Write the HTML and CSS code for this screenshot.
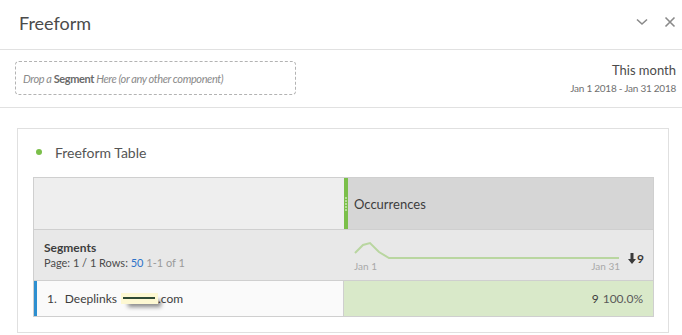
FILE: index.html
```html
<!DOCTYPE html>
<html>
<head>
<meta charset="utf-8">
<link rel="stylesheet" href="styles.css">
</head>
<body>
<div class="header">
  <div class="title">Freeform</div>
  <div class="hicons">
    <svg width="14" height="10" viewBox="0 0 14 10"><path d="M2 2.5 L7 7 L12 2.5" fill="none" stroke="#8a8a8a" stroke-width="1.6"/></svg>
    <svg width="12" height="12" viewBox="0 0 12 12"><path d="M1.5 1.5 L10.5 10.5 M10.5 1.5 L1.5 10.5" fill="none" stroke="#8a8a8a" stroke-width="1.6"/></svg>
  </div>
</div>
<div class="toolbar">
  <div class="dropzone"><span>Drop a <b>Segment</b> Here (or any other component)</span></div>
  <div class="range">
    <div class="range-name">This month</div>
    <div class="range-dates">Jan 1 2018 - Jan 31 2018</div>
  </div>
</div>
<div class="panel">
  <div class="card">
    <div class="card-title"><span class="dot"></span>Freeform Table</div>
    <div class="table">
      <div class="hcell-left"></div>
      <div class="hcell-right">
        <div class="grip"><i></i><i></i><i></i><i></i><i></i></div>
        <span>Occurrences</span>
      </div>
      <div class="seg-left">
        <div class="seg-title">Segments</div>
        <div class="seg-page">Page: 1 / 1 Rows: <span class="blue">50</span> <span class="muted">1-1 of 1</span></div>
      </div>
      <div class="seg-right">
        <div class="spark">
          <svg width="266" height="20" viewBox="0 0 266 20"><polyline points="1,13 9,5 16,3 25,12 35,18 265,18" fill="none" stroke="#b9d6a0" stroke-width="2"/></svg>
          <div class="spark-labels"><span>Jan 1</span><span>Jan 31</span></div>
        </div>
        <div class="total"><svg width="8" height="11" viewBox="0 0 8 11"><path d="M2.5 0 H5.5 V6 H8 L4 11 L0 6 H2.5 Z" fill="#3a3a3a"/></svg>9</div>
      </div>
      <div class="row-left"><span class="num">1.</span><span>Deeplinks</span><span class="redact"></span><span>.com</span></div>
      <div class="row-right"><span class="val">9</span><span class="pct">100.0%</span></div>
    </div>
  </div>
</div>
</body>
</html>
```
FILE: styles.css
```css
* { box-sizing: border-box; }
body { margin: 0; background: #fff; font-family: Lato, "Open Sans", sans-serif; color: #4b4b4b; width: 682px; height: 335px; overflow: hidden; }
.header { height: 50px; border-bottom: 1px solid #e1e1e1; display: flex; align-items: center; justify-content: space-between; padding: 0 6px 0 19px; }
.title { font-size: 18px; color: #4b4b4b; margin-top: -3px; }
.hicons { display: flex; gap: 15px; align-items: center; margin-top: -6px; }
.toolbar { height: 58px; border-bottom: 1px solid #e1e1e1; display: flex; justify-content: space-between; align-items: flex-start; padding: 11px 6px 0 15px; }
.dropzone { width: 281px; height: 34px; border: 1px dashed #b3b3b3; border-radius: 4px; font-size: 11px; letter-spacing: -0.4px; font-style: italic; color: #8a8a8a; display: flex; align-items: center; padding-left: 7px; white-space: nowrap; }
.dropzone b { color: #6a6a6a; font-weight: 700; font-style: normal; }
.range { text-align: right; padding-top: 1px; }
.range-name { font-size: 13px; color: #4b4b4b; }
.range-dates { font-size: 10px; letter-spacing: -0.25px; color: #707070; margin-top: 4px; }
.panel { padding: 20px 13px 0 17px; }
.card { height: 205px; border: 1px solid #e0e0e0; padding: 0 14px 0 15px; }
.card-title { height: 48px; display: flex; align-items: center; font-size: 14px; color: #555; padding-bottom: 2px; }
.dot { width: 6px; height: 6px; border-radius: 50%; background: #7bbf4a; margin: 0 13px 0 3px; }
.table { display: grid; grid-template-columns: 310px 1fr; grid-template-rows: 52px 51px 35px; border: 1px solid #cfcfcf; }
.hcell-left { background: #eeeeee; border-bottom: 1px solid #cfcfcf; }
.hcell-right { background: #d6d6d6; border-bottom: 1px solid #cfcfcf; display: flex; align-items: center; font-size: 13px; color: #3d3d3d; }
.grip { width: 4px; height: 100%; background: #7bbf4a; display: flex; flex-direction: column; align-items: center; justify-content: center; gap: 1px; margin-right: 6px; }
.grip i { width: 2px; height: 2px; border-radius: 50%; background: #c9e6b4; }
.hcell-right span { margin-top: 1px; }
.seg-left { background: #e8e8e8; border-bottom: 1px solid #cfcfcf; padding: 10px 0 0 10px; }
.seg-title { font-size: 12px; font-weight: 700; color: #3d3d3d; }
.seg-page { font-size: 11px; color: #4b4b4b; margin-top: 1px; }
.blue { color: #2d73c8; }
.muted { color: #9a9a9a; }
.seg-right { background: #e8e8e8; border-bottom: 1px solid #cfcfcf; display: flex; padding: 10px 0 0 10px; }
.spark { width: 266px; }
.spark svg { display: block; }
.spark-labels { display: flex; justify-content: space-between; font-size: 10px; color: #a8a8a8; }
.total { font-size: 12px; font-weight: 700; color: #3a3a3a; display: flex; align-items: center; gap: 1px; margin: 11px 0 0 8px; height: 14px; }
.row-left { background: #fafafa; border-left: 3px solid #2d8fd0; border-right: 1px solid #cfcfcf; display: flex; align-items: center; font-size: 12px; color: #3d3d3d; padding-left: 10px; }
.num { margin-right: 8px; }
.redact { background: #fdf8d2; position: relative; margin: 0 0 0 4px; height: 11px; width: 37px; display: inline-block; box-shadow: 5px 5px 4px -2px rgba(0,0,0,0.45); }
.redact::after { content: ""; position: absolute; left: 2px; right: 3px; top: 4px; height: 2px; background: #2f4a34; }
.row-right { background: #d9e9c9; display: flex; align-items: center; justify-content: flex-end; padding-right: 10px; font-size: 12px; gap: 4px; }
.val { color: #3d3d3d; }
.pct { color: #5a5a5a; }
```
